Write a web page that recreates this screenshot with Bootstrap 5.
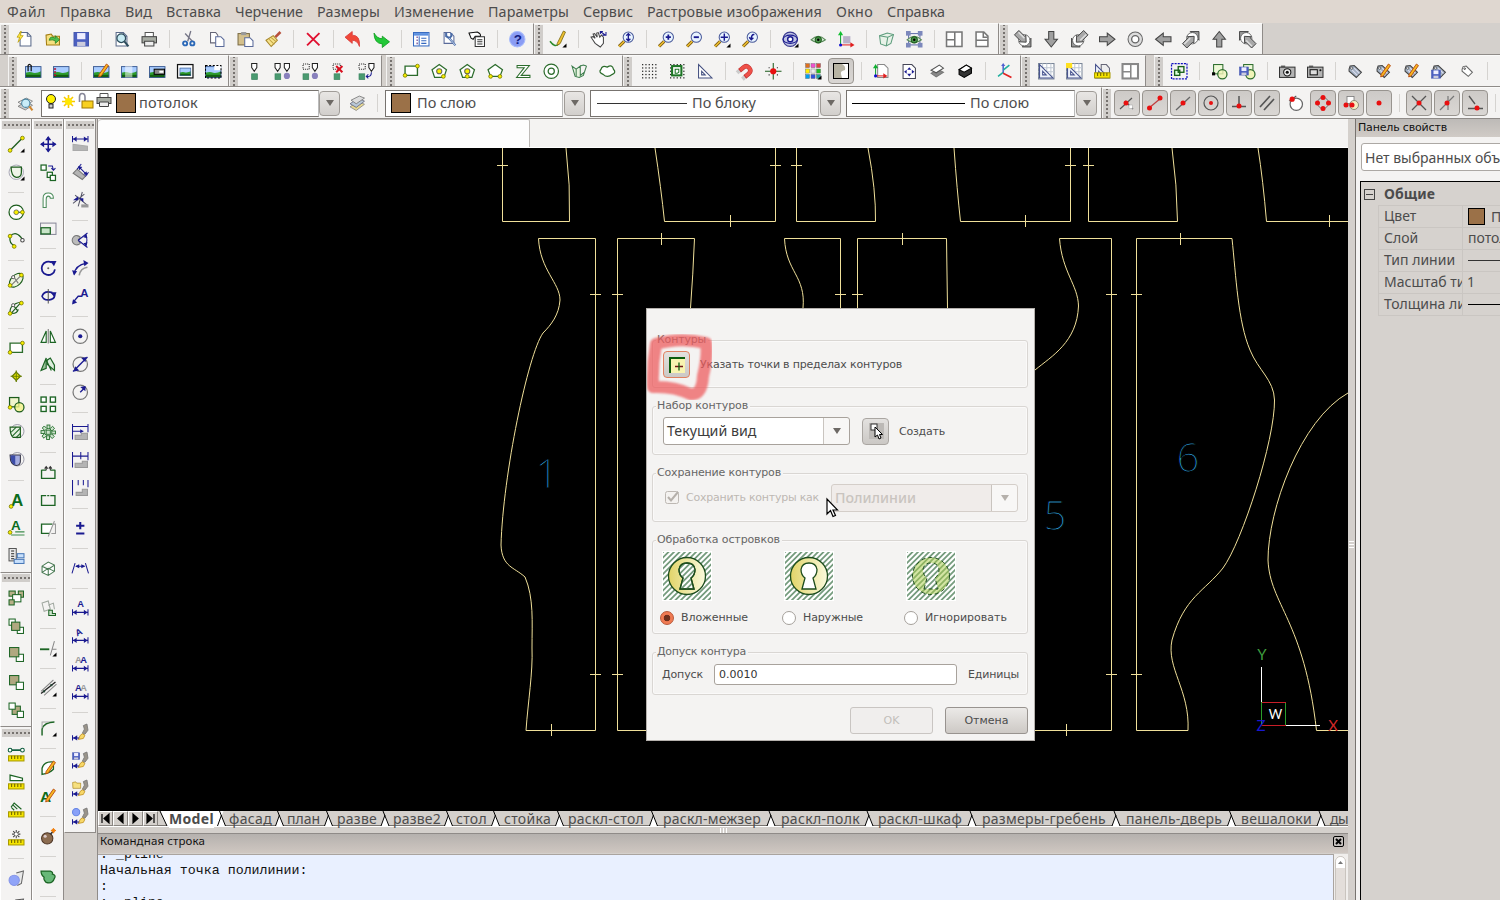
<!DOCTYPE html>
<html lang="ru">
<head>
<meta charset="utf-8">
<title>CAD</title>
<link rel="stylesheet" href="https://cdn.jsdelivr.net/npm/bootstrap@5.3.0/dist/css/bootstrap.min.css">
<style>
body{width:1500px;height:900px;overflow:hidden;background:#d4d0cc;color:#4c4c4c;font:14px/18px "Noto Sans","Open Sans",sans-serif}
.menu{height:23px;background:#dfd7d0;padding-left:7px;gap:14px;line-height:23px;font-size:14.3px}
.fit{display:inline-block;white-space:nowrap;flex:none}
.bars{height:32px;border-bottom:1px solid #8f8b88}
.tb{background:#f4f3f2;border-right:1px solid #8f8b88;border-top:1px solid #fbfbfa;flex:none}
.grip{width:8px;height:29px;margin:0 2px 0 1px;flex:none;background:linear-gradient(90deg,transparent 3px,#777370 3px,#777370 5px,transparent 5px) 0 2px/8px 4px,#d0cdca;-webkit-mask:none}
.grip{background:conic-gradient(from 0deg at 2px 2px,transparent 75%,#76726f 0) 3px 3px/8px 4px,#d0cdca}
.tool{width:28px;height:28px;flex:none;display:flex;align-items:center;justify-content:center}
.tool svg{width:16.500px;height:16.500px;overflow:visible}
.tool.on{width:26px;height:26px;margin:1px;border:1px solid #98948f;border-radius:4px;background:linear-gradient(#cdcac7,#dad7d4)}
.tool.on svg{width:16px;height:16px}
.gap-x{width:12px;height:18px;flex:none;background:linear-gradient(#d5d3d0,#d5d3d0) center/1px 100% no-repeat}
.side{width:32px;flex:none}
.vtb{background:#f4f3f2;border-right:1px solid #8f8b88;border-bottom:1px solid #8f8b88;border-left:1px solid #fff;padding-bottom:2px}
.vtb .grip{width:28px;height:8px;margin:2px 0 1px 0;background:conic-gradient(from 0deg at 2px 2px,transparent 75%,#76726f 0) 2px 3px/4px 8px,#d0cdca}
.vtb+.vtb .grip{margin:1px 0 2px}
.vtb+.vtb+.vtb .grip{margin:2px 0 3px}
.vtb .gap-x{width:16px;height:12px;background-size:100% 1px}
.sel{height:27px;background:#fff;border:1px solid #77736f;border-right-color:#bbb;font-size:14.5px;flex:none}
.sel .fit{margin-top:-2px}
.arr{width:21px;height:25px;border:1px solid #a09c98;border-radius:4px;background:linear-gradient(#e8e6e4,#d2cfcc);flex:none;margin-left:1px}
.arr::after,.drop::after{content:"";border:4px solid transparent;border-top:6px solid #6d6965;border-bottom:0}
.sw{width:20px;height:20px;background:#9b7148;border:1px solid #000;flex:none}
.ln{height:1px;background:#333;flex:none}
.mdi{width:1251px;flex:none;border-left:1px solid #8f8b88}
.mdi-top{height:29px;background:#f4f3f2;border-bottom:1px solid #fff}
.mdi-tab{width:432px;height:28px;background:#fdfdfd;border-right:1px solid #bdbab7;border-top:1px solid #bdbab7;border-radius:4px 2px 0 0}
.board{height:663px;display:block;background:#000}
.tabs{height:17px;overflow:hidden;font-size:14px;line-height:16px;background:linear-gradient(#d4d0cc 14px,#77736f 14px,#77736f 15px,#fff 15px,#fff 16px,#d4d0cc 16px)}
.nav-b{width:15px;height:15px;border:1px solid #8a8682;border-left-color:#fff;border-top-color:#fff;display:flex;flex:none}
.nav-b svg{width:13px;height:13px}
.split{height:5px}
.cmd-h{height:20px;border-top:1px solid #8f8b88;background:linear-gradient(#b5b1ae,#cfc7c1);font:11.5px/14px "Noto Sans",sans-serif;color:#111;padding:0 4px 5px 2px}
.cmd{height:60px;margin-top:1px;border-top:1px solid #aaa49f;background:#e9f0ff;font:13.3px/16px "Liberation Mono",monospace;color:#111;white-space:pre;overflow:hidden;padding-left:2px}
.cmd div:first-child{margin-top:-8px}
.sb{width:15px;background:#f0eeec;border-left:1px solid #aaa49f;margin-top:1px}
.sb i{display:block;width:11px;height:60px;margin:2px 1px;border:1px solid #c9c4be;border-radius:6px;background:#e3deda}
.sb b{display:flex;height:11px;border-radius:5px 5px 0 0;background:#fff}
.panel{width:145px;flex:none;border-left:1px solid #77736f;background:#f4f3f2;overflow:hidden}
.panel-h{height:18px;background:linear-gradient(#bdbab7,#d0cbc6);color:#111;font:11px/17px "DejaVu Sans",sans-serif;padding-left:2px;white-space:nowrap}
.pick{height:28px;margin:6px -9px 10px 5px;border:1px solid #aca8a4;border-radius:3px;background:#fff;padding-left:3px;line-height:27px;white-space:nowrap}
.props{height:720px;margin-left:4px;padding-top:1px;border:1px solid #000;border-width:1px 0 0 1px;background:#d6d2ce;white-space:nowrap;line-height:20px}
.props .line-r{height:22px;margin-left:17px;border:1px solid #cac6c2;border-width:1px 0 0 1px}
.props .k{width:84px;padding-left:5px;overflow:hidden;border-right:1px solid #cac6c2;flex:none}
.props .v{padding-left:5px}
.minus{width:11px;height:11px;border:1px solid #444;margin:0 9px 0 3px;display:flex;align-items:center}
.minus::after{content:"";width:7px;height:1px;margin:auto;background:#444}
.dlg{position:absolute;left:646px;top:308px;width:389px;height:433px;background:#f4f3f2;border:1px solid #b5b1ad;padding:31px 6px 0 5px;font:11px/14px "DejaVu Sans",sans-serif;color:#4c4c4c;z-index:3}
.grp{border:1px solid #d9d6d3;border-radius:3px;padding:0 10px;box-shadow:inset 0 0 0 1px #faf9f9}
.grp>.cap{display:table;background:#f4f3f2;margin:-8px 0 -1px -7px;padding:0 2px 0 1px;height:14px;color:#666}
.drop{height:28px;border:1px solid #a8a29c;border-radius:3px;background:linear-gradient(#fff,#fff) 0 0/159px 100% no-repeat,#f8f7f6;width:187px;padding:0 8px 0 3px;font:14.2px/26px "Noto Sans",sans-serif;color:#3c3c3c;flex:none}
.drop.off{background:linear-gradient(#f0ecea,#f0ecea) 0 0/159px 100% no-repeat,#f8f7f6;color:#c9c4bf;border-color:#d4cec9;font-weight:500}
.drop span{width:157px;border-right:1px solid #c9c4bf;height:26px}
.drop.off::after{border-top-color:#b5b0ab}
.pb{width:27px;height:27px;border:1px solid #aaa6a2;border-radius:4px;background:linear-gradient(#e3e1df,#cbc8c5);display:flex;align-items:center;justify-content:center}
.pb svg{width:18px;height:18px}
.isl{width:122px;flex:none}
.isl svg{width:50px;height:50px;display:block;margin-left:-1px}
.rad{width:14px;height:14px;border:1px solid #a5a09b;border-radius:50%;background:#fff;flex:none}
.rad.sel-on{background:radial-gradient(circle,#6e2f1c 0 3px,#f07a52 3.6px);border-color:#b8593a}
.inp{width:243px;height:21px;border:1px solid #a8a29c;border-radius:3px;background:#fff;padding-left:4px;line-height:19px;color:#333}
.act{width:83px;height:27px;border:1px solid #98938f;border-radius:3px;background:linear-gradient(#ebe9e7,#cdc9c5);text-align:center;line-height:25px}
.act.off{background:#f0eeed;border-color:#c9c5c2;color:#c2beba}
.over{position:absolute;pointer-events:none;z-index:5;overflow:visible}
</style>
</head>
<body>
<nav class="menu d-flex" id="menu"></nav>
<div class="bars d-flex" id="row1"></div>
<div class="bars d-flex" id="row2"></div>
<div class="bars d-flex" id="row3">
  <div class="tb d-flex align-items-center" style="width:1102px">
    <div class="grip"></div><div class="tool" data-i="layerfind"></div>
    <div class="sel d-flex align-items-center" style="width:278px;margin-left:2px">
      <svg width="74" height="24" viewBox="0 0 74 24" id="layerState"></svg>
      <div class="sw"></div><span class="fit" data-w="59" style="margin-left:3px">потолок</span>
    </div><div class="arr d-flex align-items-center justify-content-center" style="margin-left:0"></div>
    <div class="tool" style="margin-left:3px" data-i="layers"></div><div class="gap-x"></div>
    <div class="sel d-flex align-items-center" style="width:178px;padding-left:5px;margin-left:2px"><div class="sw"></div><span class="fit" data-w="59" style="margin-left:6px">По слою</span></div>
    <div class="arr d-flex align-items-center justify-content-center"></div>
    <div class="sel d-flex align-items-center" style="width:229px;padding-left:6px;margin-left:5px"><div class="ln" style="width:90px"></div><span class="fit" data-w="64" style="margin-left:5px">По блоку</span></div>
    <div class="arr d-flex align-items-center justify-content-center"></div>
    <div class="sel d-flex align-items-center" style="width:229px;padding-left:5px;margin-left:5px"><div class="ln bg-black" style="width:113px"></div><span class="fit" data-w="59" style="margin-left:5px">По слою</span></div>
    <div class="arr d-flex align-items-center justify-content-center"></div>
  </div>
</div>
<main class="d-flex" style="height:781px">
  <aside class="side" id="col1"></aside><aside class="side" id="col2"></aside><aside class="side" id="col3"></aside>
  <section class="mdi" style="margin-left:1px">
    <div class="mdi-top"><div class="mdi-tab"></div></div>
    <svg class="board" width="1250" height="663" viewBox="98 148 1250 663">
      <g fill="none" stroke="#f0e09a" stroke-width="1">
        <path d="M502.5 148V221.5H569.5Q570.5 185 566 148M655 148Q661 188 664.5 221.5H775.5V148M796.5 148V221.5H875.5Q876 190 868 148M954 148Q957 190 960.5 221.5H1070.5V148M1088.5 148V221.5H1177.5Q1177 185 1172 148M1258 148Q1263 180 1266.5 221.5H1348"/>
        <path d="M538.5 238.5H595.5V730.5H526C528 702 533 672 532 648C532 622 534 598 525 577C514 567 502 567 501 545C503 475 528 354 543 333C551 325 559 315 560 300C560 283 540 270 538.5 238.5"/>
        <path d="M646 730.5H617.5V238.5H694.5Q693 275 690.5 308M784.5 238.5H840.5V308M784.5 238.5C786 272 806 276 803 308M857.5 308V238.5H946.5L947.5 308"/>
        <path d="M1034 730.5H1111.5V238.5H1059.5C1062 272 1078 285 1078.500 306C1077 342 1052 356 1035 370"/>
        <path d="M1136.500 238.5H1232C1236 276 1238 322 1250 350C1258 370 1274 380 1274.500 400C1275 440 1242 542 1223 568C1205 591 1184 597 1172 640C1166 668 1190 690 1188 730.5H1136.500Z"/>
        <path d="M1348 393C1300 420 1268 510 1268 560C1270 605 1304 620 1316.500 730.5H1348"/>
        <path d="M497 165.500h11M770 165.500h11M791 165.500h11M1065 165.500h11M1083 165.500h11M730.500 215v12M1025.500 215v12M1329.500 215v12M590 294.500h11M612 294.500h11M835 294.500h11M852 294.500h11M1106 294.500h11M1131 294.500h11M590 674.500h11M612 674.500h11M1106 674.500h11M1131 674.500h11M661.500 233v12M902.500 233v12M1180.500 233v12M551.500 724v12M1066.500 724v12"/>
      </g>
      <g fill="#2b9fdd" stroke="#000" stroke-width="1" font-family="'Open Sans','Noto Sans',sans-serif" font-weight="300" font-size="40" text-anchor="middle"><text x="547" y="488">1</text><text x="1055" y="530">5</text><text x="1188" y="472">6</text></g>
      <g fill="none"><path d="M1261.500 667V702M1285 725.500H1320" stroke="#fff"/><path d="M1261 702.500H1286M1261 725.500H1286" stroke="#c81e28"/><path d="M1261.500 702V725M1285.500 703V725" stroke="#2a9c2a"/></g>
      <g font-family="Lato,sans-serif" font-weight="400" font-size="15" text-anchor="middle"><text x="1262" y="660" fill="#3f9e3f">Y</text><text x="1261" y="731" fill="#1818d0">Z</text><text x="1275.500" y="719" fill="#fff" font-size="13">W</text><text x="1333" y="731" fill="#d02828">X</text></g>
    </svg>
    <div class="tabs d-flex" id="tabs"></div>
    <div class="split d-flex align-items-center justify-content-center"><svg width="8" height="5"><path d="M1.500 0V5M4.500 0V5M7.500 0V5" stroke="#fff"/></svg></div>
    <div class="cmd-h d-flex justify-content-between align-items-center"><span class="fit" data-w="105">Командная строка</span>
      <svg width="11" height="11" viewBox="0 0 11 11"><rect x=".5" y=".5" width="10" height="10" rx="1.500" fill="#c4c0bd" stroke="#000"/><path d="M3 3l5 5M8 3l-5 5" stroke="#000" stroke-width="2"/></svg></div>
    <div class="d-flex"><div class="cmd flex-grow-1"><div>: _pline</div><div>Начальная точка полилинии:</div><div>:</div><div>: _pline</div></div><div class="sb"><i><b><svg width="9" height="10"><path d="M2 7l2.500-3L7 7z" fill="#777"/></svg></b></i></div></div>
  </section>
  <div style="width:7px" class="d-flex align-items-center"><svg width="7" height="12" style="margin-top:72px"><path d="M1 1.500H6M1 4.500H6M1 7.500H6" stroke="#fff"/></svg></div>
  <section class="panel">
    <div class="panel-h"><span class="fit" data-w="89">Панель свойств</span></div>
    <div class="pick"><span>Нет выбранных объектов</span></div>
    <div class="props">
      <div class="d-flex align-items-center" style="height:22px"><div class="minus"></div><b class="fit" data-w="51">Общие</b></div>
      <div class="line-r d-flex"><div class="k">Цвет</div><div class="v d-flex align-items-center"><div class="sw" style="width:17px;height:17px;margin-right:6px"></div>По слою</div></div>
      <div class="line-r d-flex"><div class="k">Слой</div><div class="v">потолок</div></div>
      <div class="line-r d-flex"><div class="k">Тип линии</div><div class="v d-flex align-items-center"><div class="ln" style="width:50px"></div></div></div>
      <div class="line-r d-flex"><div class="k">Масштаб типа</div><div class="v" style="padding-left:4px">1</div></div>
      <div class="line-r d-flex"><div class="k">Толщина линии</div><div class="v d-flex align-items-center"><div class="ln bg-black" style="width:50px"></div></div></div>
      <div style="height:1px;margin-left:17px;background:#cac6c2"></div>
    </div>
  </section>
</main>

<div class="dlg">
  <div class="grp" style="height:48px;margin-bottom:18px"><div class="cap"><span class="fit" data-w="49">Контуры</span></div>
    <div class="d-flex align-items-center" style="margin-top:5px"><div class="pb" style="border-color:#e08060" id="pickpt"></div><span class="fit" data-w="202" style="margin-left:10px">Указать точки в пределах контуров</span></div></div>
  <div class="grp" style="height:49px;margin-bottom:18px"><div class="cap"><span class="fit" data-w="91">Набор контуров</span></div>
    <div class="d-flex align-items-center" style="margin-top:5px"><div class="drop d-flex align-items-center justify-content-between"><span>Текущий вид</span></div><div class="pb" style="margin:0 10px 0 12px" id="newset"></div><span class="fit" data-w="46" style="margin-top:2px">Создать</span></div></div>
  <div class="grp" style="height:49px;margin-bottom:18px;padding-right:8px"><div class="cap"><span class="fit" data-w="124">Сохранение контуров</span></div>
    <div class="d-flex align-items-center" style="margin-top:5px;color:#bdb8b3"><svg style="margin:0 6px 2px 2px" width="15" height="15"><rect x=".5" y="1.500" width="13" height="12" rx="2" fill="#f4f2f0" stroke="#bdb8b3"/><path d="M3 7l3 3.500L13 2" fill="none" stroke="#b5b0ab" stroke-width="2"/></svg><span class="fit" data-w="133">Сохранить контуры как</span><div class="drop off d-flex align-items-center justify-content-between" style="margin-left:12px"><span>Полилинии</span></div></div></div>
  <div class="grp" style="height:94px;margin-bottom:18px"><div class="cap"><span class="fit" data-w="123">Обработка островков</span></div>
    <div class="d-flex" style="margin-top:5px"><div class="isl" id="is0"></div><div class="isl" id="is1"></div><div class="isl" id="is2"></div></div>
    <div class="d-flex" style="margin:10px 0 0 -3px"><div class="d-flex isl" style="gap:7px"><div class="rad sel-on"></div><span class="fit" data-w="67">Вложенные</span></div><div class="d-flex isl" style="gap:7px"><div class="rad"></div><span class="fit" data-w="60">Наружные</span></div><div class="d-flex" style="gap:7px"><div class="rad"></div><span class="fit" data-w="82">Игнорировать</span></div></div></div>
  <div class="grp" style="height:43px;margin-bottom:12px;padding-right:8px"><div class="cap"><span class="fit" data-w="89">Допуск контура</span></div>
    <div class="d-flex align-items-center justify-content-between" style="margin:6px 0 0 -1px"><span class="fit" data-w="41">Допуск</span><div class="inp">0.0010</div><span class="fit" data-w="51">Единицы</span></div></div>
  <div class="d-flex justify-content-end" style="gap:12px"><div class="act off">OK</div><div class="act">Отмена</div></div>
</div>
<svg class="over" style="left:646px;top:332px" width="70" height="72" viewBox="646 332 70 72"><defs><filter id="soft"><feGaussianBlur stdDeviation="1.200"/></filter></defs><path d="M656 344Q652 366 653 387Q674 386 690 394Q702 396 703 376Q708 356 706 343Q680 337 656 344Z" fill="none" stroke="#ee5c5f" stroke-opacity=".74" stroke-width="12" stroke-linejoin="round" filter="url(#soft)"/></svg>
<svg class="over" style="left:826px;top:498px" width="13" height="20" viewBox="0 0 13 20"><path d="M1 1V16L4.500 12.500L7 18.500L9.500 17.500L7 12H11.500Z" fill="#fff" stroke="#000" stroke-width="1.200"/></svg>

<script src="https://cdn.jsdelivr.net/npm/bootstrap@5.3.0/dist/js/bootstrap.bundle.min.js"></script>
<script>
const G='#1c6424', N='#1a1a90', K='#222', Y='#f8f000', RD='#e81010';
const P=(d,s=K,f='none',w=1)=>`<path d="${d}" stroke="${s}" fill="${f}" stroke-width="${w}"/>`;
const R=(x,y,w,h,f='none',s='none',sw=1)=>`<rect x="${x}" y="${y}" width="${w}" height="${h}" fill="${f}" stroke="${s}" stroke-width="${sw}"/>`;
const C=(x,y,r,f='none',s='none',w=1)=>`<circle cx="${x}" cy="${y}" r="${r}" fill="${f}" stroke="${s}" stroke-width="${w}"/>`;
const T=(x,y,t,f,z)=>`<text x="${x}" y="${y}" fill="${f}" font-size="${z}" font-weight="bold" font-family="Liberation Sans,sans-serif">${t}</text>`;
const D=(x,y)=>C(x,y,1.8,Y,'#7a7a00',.8), E=(x,y)=>C(x,y,2.5,RD);
const tri=P('M16 12V16H12Z','none','#000');
const rot=(a,s)=>`<g transform="rotate(${a} 8 8)">${s}</g>`;
const at=(x,y,k,s)=>`<g transform="translate(${x} ${y}) scale(${k})">${s}</g>`;
const page=P('M3 1.500H10L13.500 5V14.500H3Z','#5a6a8a','#fff')+P('M10 1.500V5H13.500','#5a6a8a');
const lens=P('M1 15L6 10','#7a5a10','none',3)+P('M1 15L6 10','#f0c030','none',1.500)+C(10,6,5,'#e8f4ff','#4a5a9a',1);
const arrow=P('M.5 5.500H8V2L15.500 8L8 14V10.500H.5Z','#444','#a0a0a0');
const view=P('M15.500 7V15.500H7Z','#333','#999',.8)+C(9,9,5.500,'#fff','#555',.8)+rot(45,P('M-1 5H7V3.500L12 8L7 12.500V11H-1Z','#444','#a8a8a8',.9)+P('M0 6.500H8','#ddd','none',1.500));
const photo=R(.5,3,15,11,'#a8ccff')+P('M.5 9.500Q5 8 8 9.500Q12 10 15.500 8V14H.5Z','none','#2e9c2e')+R(.5,11.500,15,2.500,'#126012')+R(.5,3.500,15,10.500,'none','#3c5a90',.9);
const pencil=P('M6 11L13 1L15 2.500L8 12.500L5.500 13.500Z','#b84a10','#f8b820',.9);
const disk=R(1,1.500,14,13,'#4b5fc0','#4356b0')+R(4,2,8,6,'#eef')+R(4,10.500,8,4,'#ccd');
const printer=P('M4 6V1.500H12V6','#555','#fff')+R(1,5.500,14,6,'#a8aca4','#444')+P('M3.500 10H12.500V14.500H3.500Z','#444','#eee');
const folder=P('M1 4L6 3L7.500 5H14V13.500H1.500Z','#a37c10','#f6e080');
const funnel=(x,y)=>P(`M${x} ${y}h5v4l-2.500 3.500l-2.500 -3.500z`,'#222','#fff');
const gb=(x,y)=>R(x,y,5.500,5.500,'#4a9a70','#3a8460',.7);
const dots=(()=>{let s='';for(let x=0;x<5;x++)for(let y=0;y<5;y++)s+=R(1+x*3.200,1+y*3.200,1.200,1.200,'#222');return s})();
const tag=P('M2 6L3 3L7 2.500L14 9L9 14L2 8Z','#444','#a4b2c4')+P('M7 5L12 10M5 7L10 12','#dde')+C(4.500,5,1.100,'#fff','#333',.6);
const eye=P('M1 8.500Q8 2 15 8.500Q8 14 1 8.500Z','#5a8a5a','#d5ecd5')+C(8,8.500,3,'#4b934b','#1c5c1c')+C(8,8.500,1.200,'#000');
const grid=R(.5,.5,15,15,'#fff','#7a8698')+P('M.5 4.500H15.500M.5 8.500H15.500M.5 12.500H15.500M4.500 .5V15.500M8.500 .5V15.500M12.500 .5V15.500','#c0c8d4');
const setsq=P('M1.500 1.500V14.500H14.500Z','#44508c','#eef2fa')+P('M4.500 8V11.500H8Z','#44508c','#fff');
const rul=R(.5,9.500,15,5,'#f5e400','#a89a00')+P('M3.500 9.500v3M6.500 9.500v3M9.500 9.500v3M12.500 9.500v3','#6b6000');
const dim=y=>P(`M.5 ${y-3}v6M15.500 ${y-3}v6M1 ${y}H15`,N)+P(`M1 ${y}l3.500 -2.500v5zM15 ${y}l-3.500 -2.500v5z`,'none',N);
const brush=P('M10 9L12 5L11 1.500L14.500 0L15.500 6L12.500 10Z','#777','#9a948a',.8)+P('M6 15L8 11L10 9.500L12.500 11L11 14Z','#c09020','#f8d868',.8)+P('M.5 11v5M1 13.500H7',N)+P('M1 13.500l4-2.500v5z','none',N);
const cam=R(.5,4,15,10,'#b4b4b4','#333')+R(2,2.500,4,2,'#555');
const I={
 new:page+P('M4 0L0 6H2.500L1 11L6 4.500H3.500Z','#b89a00','#ffe840',.7), open:folder+P('M4 9Q5 4 10 7V4.500L14 8.500L10 12V9.500Q7 8 4 9Z','#1f7a1f','#4ec04e',.7), save:disk,
 preview:page+C(8,7,4.200,'#c8ecf4','#2c4c5c',1.200)+P('M11 10L15 15','#2c4c5c','none',2), print:printer,
 cut:P('M9.500 0L6.500 10M4 2.500L11 10','#778','none',1.300)+C(4,12,2,'none','#2b68b8',1.800)+C(11,12,2,'none','#2b68b8',1.800),
 copy:P('M1.500 1.500H6.500L8.500 4V11.500H1.500Z','#667','#fff')+P('M6.500 5.500H11.500L14.500 8.500V15H6.500Z','#5a6a9a','#fff'), paste:R(1,2.500,11,11,'#d4c08c','#7b6c44')+R(4,1,5,3,'#999')+P('M7.500 6.500H12.500L15.500 9.500V15H7.500Z','#5a6a9a','#fff'),
 brush:P('M15 1L10 6','#b8503c','none',2.500)+P('M1 9L8 4.500L12 9L6 15Z','#a8882c','#f8e48c')+P('M4 8l5 5M6 6.500l5 4','#c0a040'), del:P('M2 2L14 14M14 2L2 14','#e01030','none',1.800),
 undo:P('M0 6L7 0.500V4Q15 4 14 15Q12 9 7 9V12Z','#d83c3c','#f04838',.8), redo:P('M16 10.500L9 16V12.500Q1 12 1 2Q4 7.500 9 7.500V5Z','#0c9c1c','#22c838',.8),
 props:R(.5,1.500,15,13,'#fff','#3468c0')+R(1,2,14,2.500,'#5c90e0')+P('M3.500 6h1M3.500 9h1M3.500 12h1','#502080','none',1.500)+P('M8 7h5M8 9.500h5M8 12h5','#3468c0')+P('M6 5V14','#3468c0'),
 wrench:P('M3 1.500H9L12.500 5V12H3Z','#5a6a9a','#fff')+P('M5 2V5L8 7L10 5V2M8 7L14 14','#4a6ca8','none',2)+P('M8 7L14 14','#dfe8f8','none',.8), hand:P('M6 5.500H15V15H6Z','#333','#fff')+P('M8 8.500h5M8 10.500h5M8 12.500h5','#333')+P('M0 2L8 1Q12 3 11 5H6L4 8L2 7Z','#111','#fff'),
 help:C(8,8,7.500,'#8a9cf4','#a8bcfc')+T(4.500,12.500,'?','#101c80',13),
 pen:P('M0 10Q5 17 9 12','#2c8a2c','none',1.500)+P('M7 12L13 0L15 1L10 12L7 14Z','#7a6a10','#f0c030',.8)+tri,
 pan:P('M3 9L1 6L3 5.500L5 7L3 3L4.500 2.500L7 6L6.500 2L8 1.500L9.500 6L11 4L13 6L13 12L10 15.500L5 12Z','#444','#fff',1)+P('M10 .5L15 4M12 4h3.500v-3M10 3v-2.500h2.500',N), zrt:lens+P('M10 2.500V9.500M8 4.500l2-2l2 2M8 7.500l2 2l2-2',N,'none',1.300),
 zin:lens+P('M7.500 6H12.500M10 3.500V8.500',N,'none',1.700), zout:lens+P('M7.500 6H12.500',N,'none',1.800), zwin:lens+P('M6.500 6H13.500M10 2.500V9.500',N,'none',1.400)+tri, zprev:lens+P('M12 3.500Q9 3 9 8M7 6l2 2.500l2-2',N,'none',1.400),
 orbit:C(8,8,7,'#c0c4e4','#3a3a90',1.200)+`<ellipse cx="8" cy="8" rx="7" ry="4" fill="none" stroke="${N}"/>`+C(8,8,2.500,'#fff',N,1.400)+tri, eye,
 ucs:R(5,5,7,7,'#b8b0c8')+P('M2.500 14V2','#10a030')+P('M0 4L2.500 0L5 4Z','none','#10c030')+P('M12 11L16 13.500L12 16Z','none','#e02020')+P('M3 13.500H13','#e02020')+C(2.500,13.500,1.500,'#1010d0'),
 box3:P('M1.500 4.500L9 2L15 3.500L12.500 12L8 14.500L2.500 12.500Z','#5c9c7c','#e8f2e8')+P('M1.500 4.500L9.500 6L15 3.500M9.500 6L8 14.500','#5c9c7c'), render:R(2.500,2.500,11,11,'none','#6470ac')+R(0,0,4.500,4.500,'#7c88bc')+R(11.500,0,4.500,4.500,'#7c88bc')+R(0,11.500,4.500,4.500,'#7c88bc')+R(11.500,11.500,4.500,4.500,'#7c88bc')+eye,
 vp1:R(.5,1,15,14,'#fff','#777',1.500)+P('M8.500 1V15M.5 8.500H8','#777','none',1.500), vp2:P('M2 1H9.500L13.500 5V15H2Z','#777','#fff',1.500)+P('M2 9H13.500M9 1V6H13','#777','none',1.500),
 aSE:view, aD:rot(90,arrow), aSW:rot(90,view), aR:arrow, ring:C(8,8,7,'#ddd','#666')+C(8,8,3.500,'#fff','#666',1.300), aL:rot(180,arrow), aNE:rot(-90,view), aU:rot(-90,arrow), aNW:rot(180,view),
 im1:photo+P('M6 8V2.500Q4 0 3 2.500V8','#111','none',1.200), im2:photo+P('M2 5v1.500M2 8v1.500M2 11v1.500','#b01030','none',2), im3:photo+pencil, im4:photo+R(4,3,7,11,'#ffffff88'), im5:photo+R(5,6,10,5,'#888','#000')+R(10,7.500,4,2,'#fff'), im6:R(.5,1.500,15,13,'#fff','#111',1.200)+at(2.500,2.500,.7,photo), im7:photo+R(9,2,7,5,'#fff')+`<rect x=".5" y="2.500" width="15" height="12" fill="none" stroke="#000" stroke-dasharray="2 1.500"/>`,
 f1:funnel(5.500,.5)+gb(5.500,10.500), f2:funnel(1,.5)+funnel(10,.5)+gb(1,10.500)+C(12.500,12.500,3,'#8880bc'), f3:`<rect x="1" y="1" width="6" height="5" fill="none" stroke="#222" stroke-dasharray="1 1"/>`+funnel(10,.5)+gb(1,10.500)+C(12.500,12.500,3,'#8880bc'), f4:`<rect x="3" y="1" width="7" height="5" fill="none" stroke="#222" stroke-dasharray="1 1"/>`+gb(4,10.500)+P('M6 3L12 9M12 3L6 9','#d81020','none',2), f5:`<rect x="1" y="1" width="6" height="5" fill="none" stroke="#222" stroke-dasharray="1 1"/>`+funnel(10.500,.5)+gb(1,10.500)+P('M13 9Q13 14 8 13M10 11l-2 2l2 2',N),
 rect:P('M2 12V3H14V12Z','#2c6c2c','#fff',1.300)+D(14,3)+D(2,12), pg1:P('M8 1.500L15 6.500L12.500 14H3.500L1 6.500Z','#2c6c2c','#fff',1.200)+C(8,8,2.500,Y,'#665')+D(12,13), pg2:P('M8 1.500L15 6.500L12.500 14H3.500L1 6.500Z','#2c6c2c','#fff',1.200)+C(8,8,2.500,Y,'#665')+D(8,13), pg3:P('M8 1.500L15 6.500L12.500 13H3.500L1 6.500Z','#2c6c2c','#fff',1.200)+D(3.500,13)+D(12.500,13),
 zz:P('M2 2.500H14L6 12H14.500V14H1.500L9 4.500H2Z','#2c6c2c','#fff'), donut:C(8,8,7,'#fff','#2c6c2c',1.200)+C(8,8,3,'none','#2c6c2c',1.200), fold:P('M1 3L5 6L9 3V12L13 9L15 3L12 12L8 14L4 13Z','#3c7c4c','#e8f4e0')+P('M5 6V13M9 3L12 2L15 3','#3c7c4c'), cloud:P('M4 11Q-1 9 2 6Q3 2 8 4Q13 1 14 6Q17 9 13 11Q8 15 4 11Z','#2c6c2c','#fff',1.200),
 grid:dots, snap:dots+R(3,3,9,9,'#fff','#1c7424',2)+P('M6 6H9.500V9L8 10H6Z','#1c7424'), ortho:P('M1.500 1.500V14.500H14.500Z','#445080','#fff',1)+P('M4.500 8V11.500H8Z','#445080'), magnet:rot(50,P('M4 12V7Q4 3 8 3Q12 3 12 7V12','#c03030','none',4.300)+P('M4 11V7Q4 3 8 3Q12 3 12 7V11','#ee5048','none',3.300)+P('M4 12V15M12 12V15','#ccc','none',4)), osn:P('M8 0V16M0 8H16','#1c5c1c')+C(8,8,3,RD)+P('M4 5v-1M12 5v-1M4 12v-1M12 12v-1'),
 pal:['#e07020','#f050d0','#e04040','#fff000','#eee','#20c020','#00a0f0','#3050e0','#20a0a0'].map((c,i)=>R(.5+i%3*5.300,.5+(i/3|0)*5.300,4,4,c,'#666',.4)).join('')+tri, bg:R(.5,.5,15,15,'#fff','#000')+P('M1 1H9Q13 3 12 7Q7 8 8 11L9 15H1Z','none','#b8b4a4'),
 pu:P('M4.500 1.500H11L14.500 5V14H4.500Z','#888','#fff')+P('M2.500 13V4','#10a030')+P('M3 12.500H12','#e02020')+P('M0 5l2.500-4l2.500 4z','none','#10b030')+P('M10 10l4 2.500l-4 2.500z','none','#e02020')+C(2.500,12.500,1.500,'#1010d0'), pz:P('M2 1.500H10.500L14 5V15H2Z','#445','#fff')+P('M8 4l2 2.500h-4zM8 13l2-2.500h-4zM3 8.500l2.500-2v4zM13 8.500l-2.500-2v4z','none',N), iso1:P('M2 10L8 6L14 9L7 13.500Z','#777','#888')+P('M2 7L10 2L14 5L7 9.500Z','#555','#fff'), iso2:P('M2 6.500L9 2L14 5V10L7 14L2 11Z','#000','#333')+P('M2 6.500L9 2L14 5L7 9Z','#000','#fff'), xyz:P('M6 10V2','#5060d0','none',1.500)+P('M6 9L1 13M6 7L12 2','#20b0a0','none',1.500)+P('M6 10L14 14','#e02020','none',1.600)+P('M4 3l2-3l2 3z','none','#5060d0'),
 g1:grid+setsq, g2:grid+setsq+R(0,0,6,5,'#ffe020'), g3:P('M7 1.500H12L15 5V11H7Z','#667','#eee')+setsq+rul, g4:R(.5,1,15,14,'#fff','#888',2)+P('M8.500 1V15M.5 8.500H8','#888','none',1.500),
 grp:`<rect x=".5" y=".5" width="15" height="15" fill="none" stroke="#1010c0" stroke-dasharray="2 1" stroke-width="1.200"/>`+R(3.500,7,5,5,'#dfd','#176017',1.300)+R(7,3.500,5.500,5.500,'none','#176017',1.300), b1:R(2.500,1.500,9,9,'#eef8d8','#2c6c2c')+C(11,11,4.500,'#f0f4b8cc','#2c6c2c',1.200)+R(1,9,3,3,'#000'), b2:R(4.500,1.500,9,9,'#eef8d8','#2c6c2c')+C(11,11,4.500,'#f0f4b8','#2c6c2c',1.200)+at(0,3,.6,disk), cam1:cam+C(8,9,3.500,'#eee','#111')+C(8,9,1.500,'#111'), cam2:cam+R(3,6.500,7,5,'#ddd','#111')+C(13,7,1,'#111'),
 t1:tag,t2:tag+pencil,t3:tag+pencil,t4:tag+at(0,6,.6,disk),t5:P('M3 6L4 3.500L7 3L13 9L9 13L3 8Z','#666','#fff')+C(5.500,5.500,.8,'#fff','#333',.8),
 layerfind:P('M1 11L9 6L15 10L8 14.500Z','#777','#ccc',.8)+P('M1 7L9 3L15 6L8 11Z','#777','#eee',.8)+C(8.500,8,4,'#c8ecf8','#4a84a0')+P('M12 11l3 4','#d08830','none',2), layers:P('M1 11.500L7 15L15 9L9 6Z','#888','#e8d890',.8)+P('M1 8.500L7 12L15 6L9 3Z','#667','#b8c8d8',.8)+P('M2 5L7 8.500L15 3L10 1Z','#777','#ddd',.8),
 s1:P('M1 14L13 3M6 6L14 14','#555','none',1.200)+E(7,8)+R(10,10,3.500,3.500,'#fff','#aaa',.6), s2:P('M2 13L14 3','#c04040','none',1.300)+E(2.500,13)+E(13,3), s3:P('M1 15L15 2','#666','none',1.300)+E(8,8), s4:C(8,8,7,'none','#555',1.200)+C(8,8,2,RD), s5:P('M8 1V11M1 11.500H15','#555','none',1.500)+E(8,11), s6:P('M1 12L11 1M5 15L15 4','#555','none',1.700), s7:C(9,9,6,'#fff','#666',1.200)+P('M2 6L9 1','#555')+E(5,4), s8:C(8,8,5.500,'none','#777')+E(8,2.500)+E(8,13.500)+E(2.500,8)+E(13.500,8), s9:R(4,1.500,7,7,'#fff','#777',.8)+C(11,10,4.500,'#f4eec0','#776',.8)+E(3,10)+E(9,10), s10:E(8,8), s11:P('M1 1L15 15M15 1L1 15','#555','none',1.300)+E(8,8), s12:P('M1 15L15 1M9 1V15','#777','none',1.200)+E(8,8), s13:P('M2 1L8 9M1 13.500H16','#555','none',1.300)+E(10,13),
 line:P('M2 14L14 2','#1c5c1c','none',1.300)+D(2,14)+D(14,2)+tri, shp:C(8,8,7,'none','#99a',.8)+P('M3 3H13V8Q13 13 8 13Q3 12 3 3Z','#1c5c1c','#eff4e8',1.200)+tri, circ:C(8,8,7,'#fff','#1c5c1c',1.200)+P('M8 8H14','#1c5c1c')+C(8,8,2.300,Y,'#665',.8)+D(14,8), arc:P('M2 4Q8-2 14 7M2 5Q1 11 6 13','#1c5c1c','none',1.200)+D(2,4)+D(6,14)+C(14,8,1.700,'#fff','#444'), ell:rot(-45,`<ellipse cx="8" cy="8" rx="8" ry="5" fill="#eef4e0" stroke="#1c5c1c" stroke-width="1.100"/>`)+P('M3 13L13 3M5 4L10 11','#777')+D(2,13)+D(13,3)+C(5,5,1.500,'#fff','#444',.8), ela:P('M2 13Q1 4 13 2M3 13L12 3M5 5L9 10M4 13Q9 13 10 9','#1c5c1c','none',1.100)+D(2,13)+D(13,3)+C(5,5,1.500,'#fff','#444',.8), pt:P('M8 2.500V13.500M2.500 8H13.500','#667c00','none',1.200)+P('M8 4L12 8L8 12L4 8Z','#667c00',Y,1.300)+P('M8 5V11M5 8H11','#667c00'), blk:R(1.500,1.500,9,9,'#f0f4cc','#1c5c1c',1.200)+C(11,11,4.500,'#f4f488cc','#1c5c1c',1.200)+D(2,11),
 hat:C(9,7,6.500,'none','#889',.8)+P('M2 3H12V13H5Q2 11 2 3Z','#1c5c1c','#e4f0e0',1.100)+P('M3 8L8 3M4 12L12 4M8 13L12 9',G), grd:C(9,7,6.500,'none','#889',.8)+P('M2 3H12V9Q12 13 8 13Q2 13 2 3Z','#334','#a4ace0',1)+P('M2.500 3.500H7V12.500Q2.500 12 2.500 3.500Z','none','#3c4ca8'), A1:T(3,14,'A','#0c6c1c',16.500)+D(3,14), A2:T(3,10,'A','#0c6c1c',13)+P('M7 11.500H16M3 14.500H16','#3c8c4c')+D(2,12), tbl:R(1,.5,7,12,'#eee','#555')+P('M3 3h3M3 5.500h3M3 8h3M3 10.500h3')+R(9,5.500,6.500,4,'#c8e0fc','#4878b8')+R(6,11,9.500,4,'#c8e0fc','#4878b8'),
 o1:R(1,1,6,5,'#b8b088',G)+R(10,1,5,6,'#b8b088',G)+R(4.500,4.500,8,7,'#fff',G)+R(1,9.500,5,5,'#b8b088',G), o2:R(1,1,6,6,'#fff',G)+R(9,9,6,6,'#fff',G)+R(3.500,4,8,8,'#b0a880',G), o3:R(8,8,7,7,'#fff',G)+R(1.500,1.500,9,9,'#b0a880',G), o4:R(1.500,1.500,9,9,'#b0a880',G)+R(8,8,7,7,'#fff',G), o5:R(4,4,8,8,'#b0a880',G)+R(1,1,6,6,'#fff',G)+R(9,9,6,6,'#fff',G),
 m1:rul+P('M2 4H14','#085838','none',1.600)+C(2,4,1.800,'#fff','#085838')+C(14,4,1.800,'#fff','#085838'), m2:rul+P('M2 6.500V1L14 4V6.500Z',G,'#fff',1.200), m3:rul+P('M3 5L6 1L13 7M3 5L6 8M5 3L9 7',G,'none',1.100), m4:rul+P('M8 0V8M4 4H12M5 1L11 7M11 1L5 7','#444')+C(8,4,1.500,'#fff'), m5:P('M8 3L15 1L13 13L9 15','#666','#e8e8e8')+C(6,10,5,'#90a4f8','#8494e8'), m6:P('M7 2L15 1L12 14','#555','#ddd'),
 mv:P('M8 1V15M1 8H15',N,'none',1.500)+P('M5 4l3-4l3 4zM5 12l3 4l3-4zM4 5l-4 3l4 3zM12 5l4 3l-4 3z','none',N), cp:R(1,1,5,5,'#fff',G,1.200)+R(7,8,5,5,'#fff',G,1.200)+R(10,11,5,5,'#fff',G,1.200)+P('M8 2H12L13 6M11 4l2 2l2-2',N), off:P('M3 15V6Q3 1 8 1Q13 1 13 6H10Q10 4 8 4Q6 4 6 7V15Z','#4c8c5c','#fff'), scl:R(.5,3,15,11,'none','#889')+R(1,7.500,9,6,'#c8e4c8',G,1.200), rotn:P('M11.500 2.500A6.500 6.500 0 1 0 14.500 9',N,'none',1.700)+P('M10 1L16 1L13.500 6Z','none',N)+C(8,8,1,'#666'), rot3:P('M12 4.500Q4 2 2 8Q4 13 11 11Q15 10 14 5',N,'none',1.600)+P('M10 4l6 0l-2 5z','none',N)+P('M8 1V15','#555'), mir:P('M1 14L6 3V14ZM15 14L10 3V14Z',G,'#fff',1.100)+P('M8 1V15','#777'), mir3:P('M1 14L6 2V12Z',G,'#9cc49c',1.100)+P('M7 4L10 2L14 9V14L7 8ZM6 4L11 14',G,'#dcecdc',1.200), arr4:[[1,1],[10,1],[1,10],[10,10]].map(a=>R(a[0],a[1],5,5,'#fff',G,1.300)).join(''), polar:[0,45,90,135,180,225,270,315].map(a=>rot(a,R(6.800,1,2.800,3.600,'#cde4cd','#2c7434',.9))).join('')+R(6,6,4,4,'#cde4cd','#2c7434',.9),
 br1:P('M1.500 5.500V14H14.500V5.500M1.500 6H6M14.500 6H10',G,'none',1.300)+P('M6 6v-3M4.500 4.500l1.500-2l1.500 2M10 6v-3M8.500 4.500l1.500-2l1.500 2','#333'), br2:P('M6 3.500H1.500V13H14.500V3.500H10M7 3.500h2',G,'none',1.300), trim:P('M9 13H1.500V4H12',G,'#fff',1.300)+P('M12 4H15V13H11M14 1L8 16','#999'), ex:P('M2 6L8 2L14 5V11L8 15L2 12ZM2 6L8 9L14 5M8 9V15M2 12L8 8L14 11','#4a7a54','#fff'), al:P('M2 3L8 1L10 9L4 11ZM8 5L13 3L14 9','#a0a8a0')+P('M8.500 15V10H12V13H15V15Z',G,'#cde4cd'), brk:P('M0 9H9',G,'none',1.800)+P('M14 1L10 15M12 9h4','#888')+tri, ml:P('M1 11L13 0M4 15L16 4','#888')+P('M1 13L15 2','#222','none',1.300)+R(3,10,2,2,'#243')+R(10,4,2,2,'#243')+tri, fil:P('M2 15V9Q4 2 14 2',G,'none',1.400)+P('M2 8V2H9','#aaa')+tri, pe:P('M2 14V8Q4 1 13 2V9Q9 13 2 14Z',G,'#fff',1.300)+pencil, te:T(0,14,'A','#0c6c1c',15)+pencil, bomb:C(7,10,5.500,'#8c6c50','#4c3424')+C(5,8,1.500,'#dcc')+P('M10 6L13 3','#333','none',1.500)+P('M13 0v5M10.500 2.500h5M11.500 1l3 3M14.500 1l-3 3','#f08010'), reg:P('M1 3H10Q13 4 12 6Q16 7 14 10Q12 16 6 14Q3 11 4 9Q1 7 1 3Z',G,'#68b878',1.200),
 d1:P('M1 8V14H15V10Z','#aaa','#b4b4b4')+dim(3), d2:P('M1 9L5 5L13 12L10 15Z','#777','#b4b4b4')+P('M5 5L9 0M13 12L16 8M7 3L14 10',N)+P('M6 2l4 1l-3 3zM15 11l-1-4l-3 3z','none',N), d3:P('M3 3L15 13M1 11L12 2M10 0L6 14','#556')+R(9,12,7,3,'#999')+P('M1 8h5v-4zM7 6h4v4z','none',N), d4:P('M8 5A4.500 4.500 0 1 0 8 11L6 8Z','#777','#bbb')+P('M6 8L15 1M6 8L15 15M13 3Q16 8 13 13',N)+P('M11 5l3-3l1 4zM11 11l4-1l-1 4z','none',N), d5:P('M2 14Q3 5 14 3',N,'none',1.300)+P('M0 10l2 5l3-4zM11 0l5 3l-4 3z','none',N)+P('M7 15Q8 8 15 7','#999','none',1.600), d6:P('M1 14L6 8H9',N,'none',1.300)+P('M0 16l1-5l4 3z','none',N)+T(8,9,'A',N,11), d7:C(8,8,7,'none','#777',1.200)+C(8,8,2,N), d8:C(8,8,7,'none','#777',1.200)+P('M1 15L15 1',N,'none',1.300)+P('M2 15l1-5l4 4zM14 1l-1 5l-4-4z','none',N), d9:C(8,8,7,'none','#777',1.200)+P('M8 8L13 3',N,'none',1.300)+P('M13 2l0 5l-5-4z','none',N),
 d10:P('M3 15V11H9V9H15V15Z','#999','#b4b4b4')+P('M.5 0V15M15.500 0V8M1 2.500H15M1 7H11',N)+P('M11 7l-3-2v4z','none',N), d11:P('M3 15V11H10V9H15V15Z','#999','#b4b4b4')+P('M.5 0V15M15.500 0V8M8.500 0V7M1 4H15',N), d12:P('M4 15V12H10V9H15V15Z','#999','#b4b4b4')+P('M.5 0V15M6 0V5M11 0V5M15.500 0V7',N), pm:P('M8 2V9M4 5.500H12M4 13H12',N,'none',2), d13:P('M0 13L3 3M16 13L13 3M4 6H12',N)+P('M3 6l4-2v4zM13 6l-4-2v4z','none',N),
 e1:T(5,7,'A',N,9)+dim(12), e2:rot(-25,T(5,7,'A',N,9))+dim(12), e3:T(3,7,'A','#999',9)+T(8,7,'A',N,9)+dim(12), e4:T(3,7,'A',N,9)+T(8,7,'A','#999',9)+dim(12), h1:brush,h2:brush+at(0,0,.5,disk),h3:brush+at(0,0,.6,folder),h4:brush+C(4,4,3.500,'#88a0f8','#6484e4')
};
const ico=n=>`<svg viewBox="0 0 16 16">${I[n]||''}</svg>`;
const tool=n=>n==='|'?'<div class="gap-x"></div>':`<div class="tool${n[0]==='*'?' on':''}">${ico(n.replace('*',''))}</div>`;
// a bar: start offset, width, icon list
function bar(row,lead,width,pad,list){
  row.insertAdjacentHTML('beforeend',`<div class="tb d-flex align-items-center" style="margin-left:${lead}px;width:${width}px"><div class="grip" style="margin-right:${pad-9}px"></div>${list.split(' ').map(tool).join('')}</div>`);
}
const $=s=>document.getElementById(s);
bar($('row1'),0,534,11,'new open save | preview print | cut copy paste brush | del | undo redo | props wrench hand | help');
bar($('row1'),0,465,10,'pen | pan zrt | zin zout zwin zprev | orbit eye ucs | box3 render | vp1 vp2');
bar($('row1'),0,264,10,'aSE aD aSW aR ring aL aNE aU aNW');
bar($('row2'),8,221,11,'im1 im2 | im3 im4 im5 im6 im7');
bar($('row2'),0,153,11,'f1 f2 f3 f4 f5');
bar($('row2'),4,237,11,'rect pg1 pg2 pg3 zz donut fold cloud');
bar($('row2'),0,398,12,'grid snap ortho | magnet osn | pal *bg | pu pz iso1 iso2 | xyz');
bar($('row2'),0,125,11,'g1 g2 g3 g4');
bar($('row2'),8,360,11,'grp | b1 b2 | cam1 cam2 | t1 t2 t3 t4 t5 |');
bar($('row3'),0,400,11,'*s1 *s2 *s3 *s4 *s5 *s6 s7 *s8 *s9 *s10 | *s11 *s12 *s13 |');
function col(c,list){c.insertAdjacentHTML('beforeend',`<div class="vtb d-flex flex-column align-items-center"><div class="grip"></div>${list.split(' ').map(tool).join('')}</div>`)}
col($('col1'),'line shp | circ arc | ell ela | rect pt blk hat grd | A1 A2 tbl');
col($('col1'),'o1 o2 o3 o4 o5');
col($('col1'),'m1 m2 m3 m4 | m5 m6');
col($('col2'),'mv cp off scl | rotn rot3 | mir mir3 | arr4 polar | br1 br2 trim | ex | al | brk | ml | fil | pe te | bomb | reg |');
col($('col3'),'d1 d2 d3 | d4 d5 d6 | d7 d8 d9 | d10 d11 d12 | pm | d13 | e1 e2 e3 e4 | h1 h2 h3 h4');
document.querySelectorAll('[data-i]').forEach(e=>e.innerHTML=ico(e.dataset.i));
$('layerState').innerHTML=C(9,8,4.500,'#fff200','#222')+R(7,13,4,4,'#ccc','#222')+`<g stroke="#f8c800" stroke-width="1.600"><path d="M26.500 4V17M20 10.500H33M22 6L31 15M31 6L22 15"/></g>`+C(26.500,10.500,3.500,'#ffe800')+P('M37.500 11V6Q37.500 2.500 40 2.500Q43 2.500 43 6V11','#889','none',1.600)+R(40,10,11,7,'#f8d020','#a07800')+at(54,1,1,printer);
$('pickpt').innerHTML=`<svg viewBox="0 0 18 18">${R(3,3,14,14,'#f8f4b0')+P('M2 17V2H17','#0c5c0c','none',2)+P('M7 10.500H15','#701818','none',1.500)+P('M11 6.500V14.500','#0c5c0c','none',1.300)}</svg>`;
$('newset').innerHTML=`<svg viewBox="0 0 18 18">${R(2,1,15,16,'#bcb9b6')+R(4,2,6,6,'#fff','#333')+P('M8 5V15L10.500 13L12 17L14 16L12.500 12.500H15.500Z','#000','#fff')}</svg>`;
// island detection pictures
const hatch=c=>{let d='';for(let i=-48;i<96;i+=5.5)d+=`M${i} 50L${i+50} 0`;return P(d,c,'none',1.8)};
const hole='M18 38L21 27Q17 24 17 18.500Q18 12 25 12Q32 12 33 18.500Q33 24 29 27L32 38Z';
[0,1,2].forEach(k=>{
  const dash=k===2?'stroke-dasharray="4 3"':'', h=hatch('#769c7e'), w=k===2?1:1.3;
  $('is'+k).innerHTML=`<svg viewBox="0 0 50 50"><defs><clipPath id="h${k}"><path d="${hole}"/></clipPath><clipPath id="q${k}"><rect x="1" y="1" width="48" height="48"/></clipPath><linearGradient id="g${k}"><stop offset="0" stop-color="#e2d468"/><stop offset="1" stop-color="#fafadc"/></linearGradient></defs><rect width="50" height="50" fill="#fff"/><g clip-path="url(#q${k})">${h}<circle cx="25" cy="25" r="18.500" fill="${k===2?'#a8cc48':`url(#g${k})`}" fill-opacity="${k===2?.5:1}" stroke="#1c4c1c" stroke-width="${w}" ${dash}/>${k===2?`<g clip-path="url(#h2)"><rect width="50" height="50" fill="#fff"/>${h}</g>`:''}<path d="${hole}" fill="${k===2?'none':'#fff'}" stroke="#1c4c1c" stroke-width="${w}" ${dash}/>${k===0?`<g clip-path="url(#h0)">${h}</g><path d="${hole}" fill="none" stroke="#1c4c1c" stroke-width="1.300"/>`:''}</g></svg>`;
});
$('menu').innerHTML=[['Файл',39],['Правка',51],['Вид',27],['Вставка',55],['Черчение',68],['Размеры',63],['Изменение',80],['Параметры',81],['Сервис',50],['Растровые изображения',175],['Окно',37],['Справка',58]].map(m=>`<span class="fit" data-w="${m[1]}">${m[0]}</span>`).join('');
const tabs=[['Model',169,45],['фасад',229,43],['план',287,33],['разве',337,40],['разве2',393,48],['стол',456,31],['стойка',504,47],['раскл-стол',568,76],['раскл-межзер',663,98],['раскл-полк',781,79],['раскл-шкаф',878,84],['размеры-гребень',982,124],['панель-дверь',1126,96],['вешалоки',1241,71],['ды',1330,18]];
$('tabs').innerHTML=['M3 2V11M10 2V11L5 6.500Z','M9 2V11L4 6.500Z','M4 2V11L9 6.500Z','M10 2V11M3 2V11L8 6.500Z'].map(d=>`<div class="nav-b"><svg viewBox="0 0 13 13">${P(d,'#000','#000',1.200)}</svg></div>`).join('')
 +`<svg width="11" height="16" style="flex:none">${P('M2 0L9 15H11V0Z','none','#fff')+P('M2 0L9 15','#000')}</svg>`
 +tabs.map((t,i)=>{const n=tabs[i+1],g=n?n[1]-t[1]-t[2]:0,c=g/2;
  return `<span class="fit${i?'':' fw-bold bg-white'}" data-w="${t[2]}">${t[0]}</span>`+(n?`<svg width="${g}" height="16" style="flex:none">${P(`M${c} 4L${c-4} 15H${c+4}Z`,'none','#fff')+(i?'':P(`M0 0H${c+2}L${c-4} 15H0Z`,'none','#fff'))+P(`M${c-4} 15L${c} 4M${c-2} 0L${c+4} 15`,'#000')}</svg>`:'')}).join('');
// spread each caption over its column width
document.querySelectorAll('.fit').forEach(e=>{const w=+e.dataset.w,n=e.textContent.length;const nat=e.getBoundingClientRect().width;e.style.letterSpacing=((w-nat)/n).toFixed(3)+'px';e.style.width=w+'px'});
</script>
</body>
</html>
